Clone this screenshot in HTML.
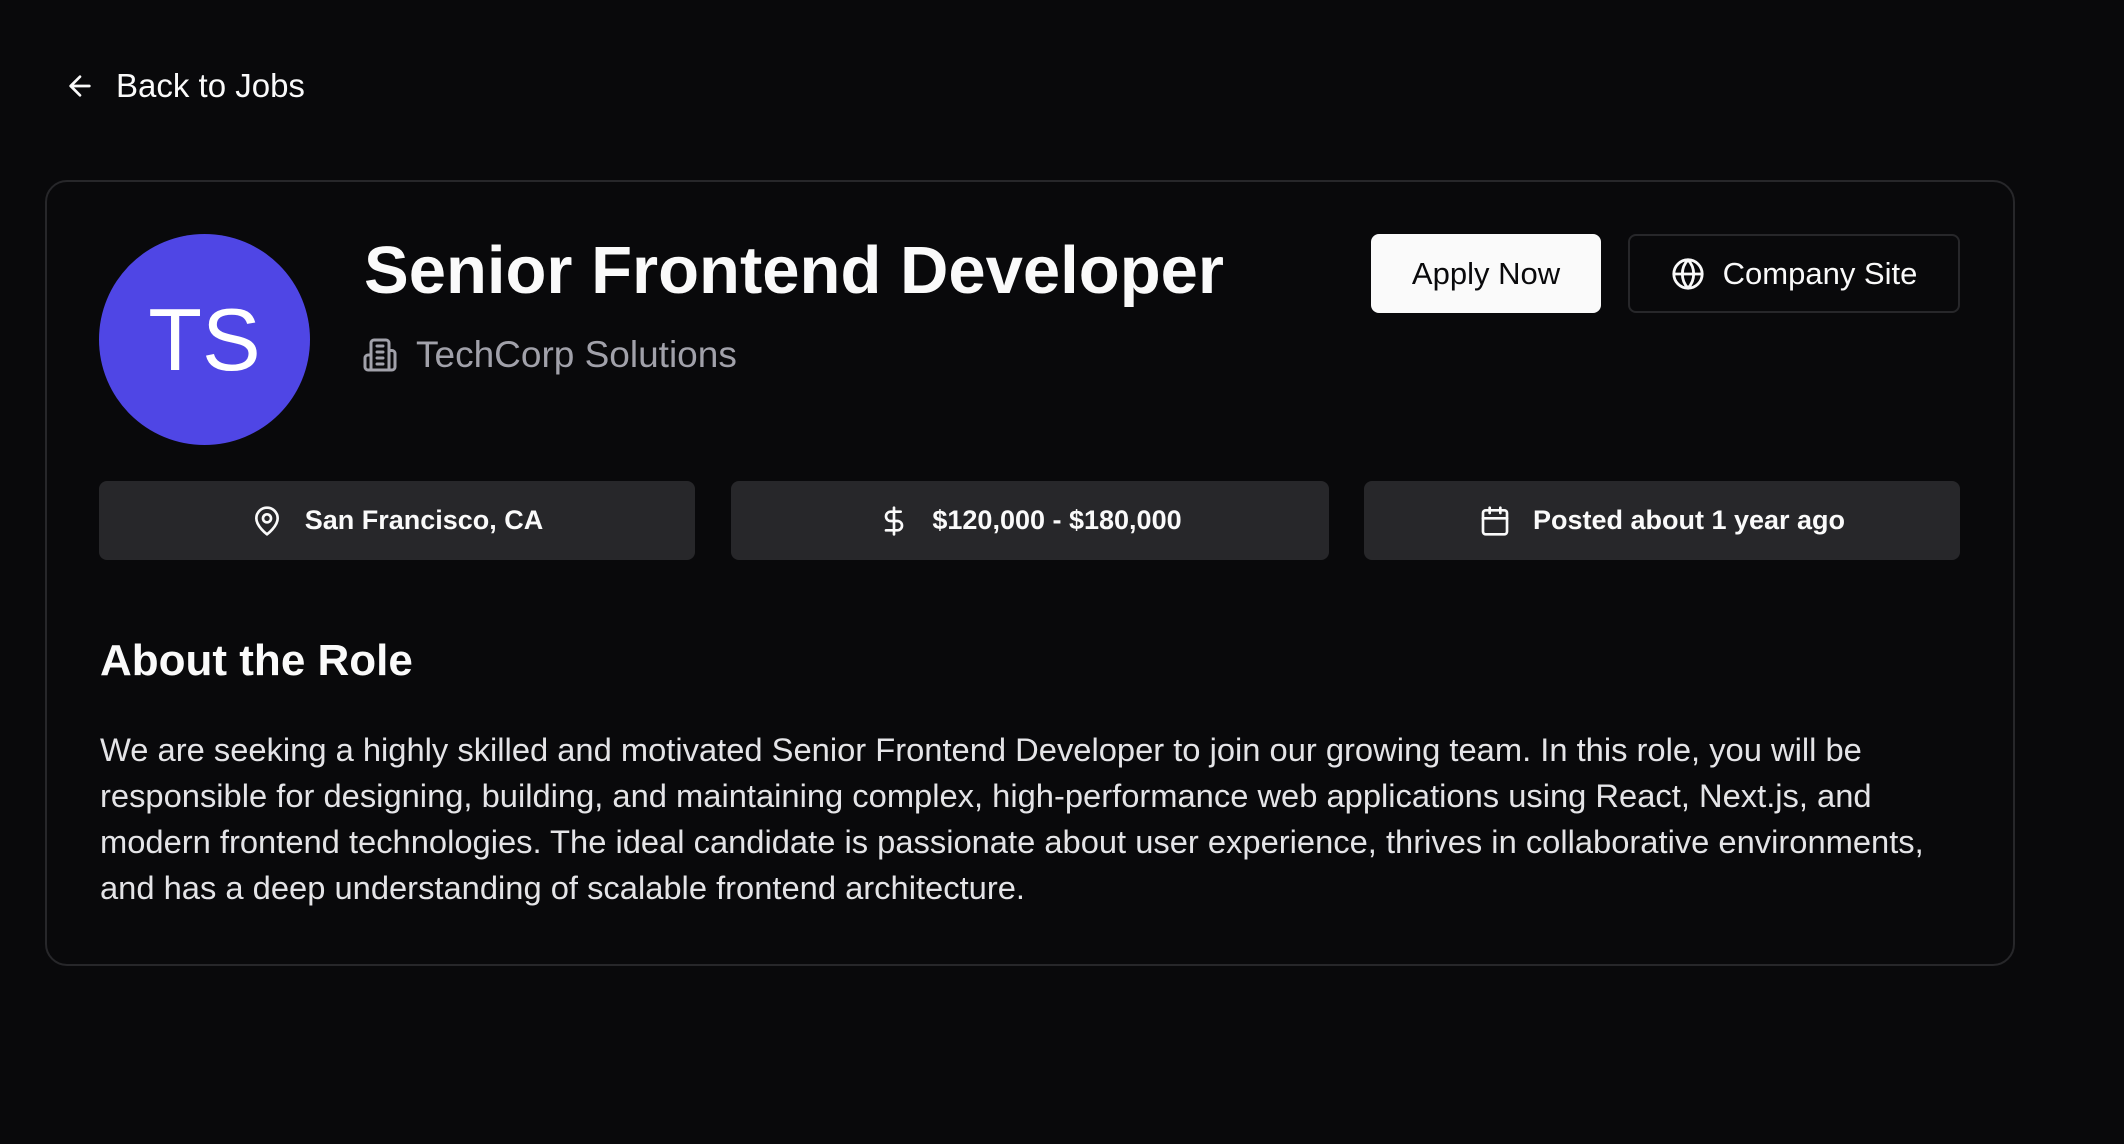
<!DOCTYPE html>
<html><head><meta charset="utf-8"><style>
*{box-sizing:border-box;margin:0;padding:0}
body{width:2124px;height:1144px;background:#09090b;color:#fafafa;font-family:"Liberation Sans",sans-serif;position:relative;overflow:hidden}
.abs{position:absolute}
.card{left:45px;top:180px;width:1970px;height:786px;border:2px solid #27272a;border-radius:22px}
.av{left:99px;top:234px;width:211px;height:211px;border-radius:50%;background:#4f46e5;display:flex;align-items:center;justify-content:center;font-size:88px;color:#fff}
.btn{top:234px;height:79px;border-radius:8px;display:flex;align-items:center;justify-content:center;font-size:31px}
.chip{top:481px;height:79px;background:#27272a;border-radius:8px;display:flex;align-items:center;justify-content:center;font-size:27px;font-weight:bold;gap:22px}
svg{fill:none;stroke:currentColor;stroke-width:2;stroke-linecap:round;stroke-linejoin:round}
p{left:100px;top:727px;font-size:32.7px;line-height:46px;color:#e4e4e7;white-space:nowrap}
</style></head><body>
<div class="abs" style="left:64px;top:67px;display:flex;align-items:center;gap:20px;font-size:33px">
<svg width="32" height="32" viewBox="0 0 24 24"><path d="M19 12H5M12 19l-7-7 7-7"/></svg>Back to Jobs</div>
<div class="abs card"></div>
<div class="abs av">TS</div>
<div class="abs" style="left:364px;top:232px;font-size:67px;font-weight:bold">Senior Frontend Developer</div>
<div class="abs" style="left:362px;top:334px;display:flex;align-items:center;gap:18px;font-size:37px;color:#a1a1aa">
<svg width="36" height="36" viewBox="0 0 24 24"><path d="M6 22V4a2 2 0 0 1 2-2h8a2 2 0 0 1 2 2v18Z"/><path d="M6 12H4a2 2 0 0 0-2 2v6a2 2 0 0 0 2 2h2M18 9h2a2 2 0 0 1 2 2v9a2 2 0 0 1-2 2h-2M10 6h4M10 10h4M10 14h4M10 18h4"/></svg>TechCorp Solutions</div>
<div class="abs btn" style="left:1371px;width:230px;background:#fafafa;color:#09090b">Apply Now</div>
<div class="abs btn" style="left:1628px;width:332px;border:2px solid #27272a;gap:18px">
<svg width="34" height="34" viewBox="0 0 24 24"><circle cx="12" cy="12" r="10"/><path d="M12 2a14.5 14.5 0 0 0 0 20 14.5 14.5 0 0 0 0-20M2 12h20"/></svg>Company Site</div>
<div class="abs chip" style="left:99px;width:596px"><svg width="32" height="32" viewBox="0 0 24 24"><path d="M20 10c0 6-8 12-8 12s-8-6-8-12a8 8 0 0 1 16 0Z"/><circle cx="12" cy="10" r="3"/></svg>San Francisco, CA</div>
<div class="abs chip" style="left:731px;width:598px"><svg width="32" height="32" viewBox="0 0 24 24"><path d="M12 2v20M17 5H9.5a3.5 3.5 0 0 0 0 7h5a3.5 3.5 0 0 1 0 7H6"/></svg>$120,000 - $180,000</div>
<div class="abs chip" style="left:1364px;width:596px"><svg width="32" height="32" viewBox="0 0 24 24"><rect x="3" y="4" width="18" height="18" rx="2"/><path d="M16 2v4M8 2v4M3 10h18"/></svg>Posted about 1 year ago</div>
<div class="abs" style="left:100px;top:636px;font-size:44px;font-weight:bold">About the Role</div>
<p class="abs">We are seeking a highly skilled and motivated Senior Frontend Developer to join our growing team. In this role, you will be<br>responsible for designing, building, and maintaining complex, high-performance web applications using React, Next.js, and<br>modern frontend technologies. The ideal candidate is passionate about user experience, thrives in collaborative environments,<br>and has a deep understanding of scalable frontend architecture.</p>
</body></html>
